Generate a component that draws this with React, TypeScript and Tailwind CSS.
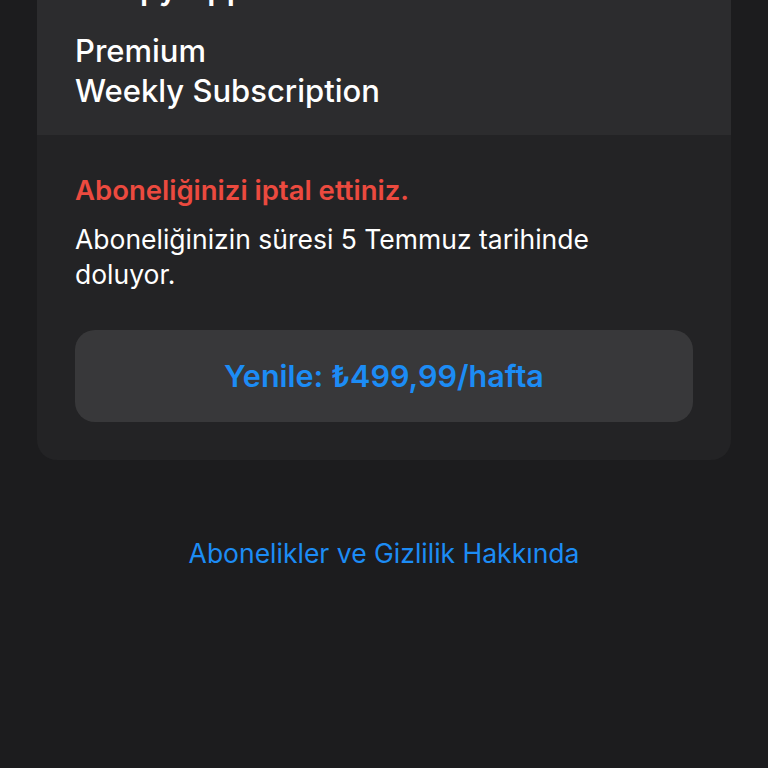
export default function App() {
  return (
    <div
      className="min-h-[768px] bg-[#1c1c1e] px-[37px] overflow-hidden"
      style={{ fontFamily: 'Inter, "Noto Sans", sans-serif' }}
    >
      <div className="-mt-[29px] rounded-b-[20px] overflow-hidden">
        {/* Header part of the card */}
        <div className="bg-[#2c2c2e] px-[38px] pb-[24px]">
          <div className="text-[31px] leading-[36px] font-semibold text-white">Sleepy Apps</div>
          <div className="mt-[24px] text-[31px] leading-[40px] font-medium text-white">
            <div>Premium</div>
            <div>Weekly Subscription</div>
          </div>
        </div>

        {/* Status part */}
        <div className="bg-[#232325] px-[38px] pt-[38px] pb-[38px]">
          <div className="text-[27.5px] leading-[34px] font-semibold text-[#ec4a3f]">
            Aboneliğinizi iptal ettiniz.
          </div>
          <div className="mt-[15px] text-[26.5px] leading-[35px] text-white">
            Aboneliğinizin süresi 5 Temmuz tarihinde
            <br />
            doluyor.
          </div>
          <button className="mt-[38px] w-full h-[92px] rounded-[20px] bg-[#38383a] flex items-center justify-center text-[30.5px] font-semibold text-[#1c8cf5]">
            Yenile: ₺499,99/hafta
          </button>
        </div>
      </div>

      <div className="mt-[76px] text-center text-[26.5px] leading-[34px] text-[#1c8cf5]">
        Abonelikler ve Gizlilik Hakkında
      </div>
    </div>
  );
}
